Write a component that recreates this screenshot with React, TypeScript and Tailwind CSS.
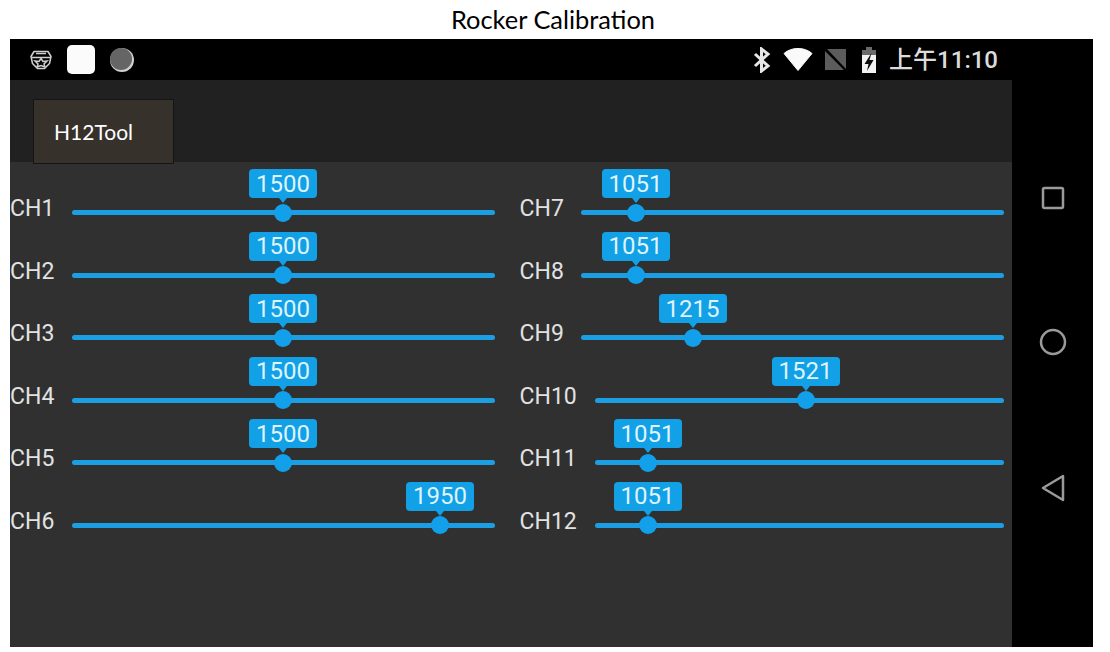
import React from "react";

interface Channel {
  name: string;
  value: number;
  thumb: number; // px from the track start
}

const leftChannels: Channel[] = [
  { name: "CH1", value: 1500, thumb: 211 },
  { name: "CH2", value: 1500, thumb: 211 },
  { name: "CH3", value: 1500, thumb: 211 },
  { name: "CH4", value: 1500, thumb: 211 },
  { name: "CH5", value: 1500, thumb: 211 },
  { name: "CH6", value: 1950, thumb: 368 },
];

const rightChannels: Channel[] = [
  { name: "CH7", value: 1051, thumb: 55 },
  { name: "CH8", value: 1051, thumb: 55 },
  { name: "CH9", value: 1215, thumb: 112 },
  { name: "CH10", value: 1521, thumb: 211 },
  { name: "CH11", value: 1051, thumb: 53 },
  { name: "CH12", value: 1051, thumb: 53 },
];

const ChannelRow: React.FC<{ channel: Channel; labelClass: string }> = ({ channel, labelClass }) => (
  <div className="flex h-[62.6px] items-start pt-[29px]">
    <span className={`${labelClass} shrink-0 text-[23px] leading-[24px] text-[#e2e2e2]`}>{channel.name}</span>
    <div className="relative mt-[13px] h-[5px] flex-1 rounded-full bg-[#1b9fe2]">
      <div
        className="absolute top-1/2 h-[18px] w-[18px] -translate-x-1/2 -translate-y-1/2 rounded-full bg-[#12a0ea]"
        style={{ left: channel.thumb }}
      />
      <div
        className="absolute top-[-41px] flex h-[29px] w-[68px] -translate-x-1/2 items-center justify-center rounded-[4px] bg-[#12a0e6] text-[24px] leading-none text-[#dff3fc]"
        style={{ left: channel.thumb }}
      >
        {channel.value}
        <span className="absolute bottom-[-5px] left-1/2 h-0 w-0 -translate-x-1/2 border-x-[4px] border-t-[5px] border-x-transparent border-t-[#12a0e6]" />
      </div>
    </div>
  </div>
);

const StatusLeft = () => (
  <div className="flex items-center">
    <svg width="24" height="22" viewBox="0 0 24 22" fill="none" stroke="#d0d0d0" strokeWidth="1.500" className="ml-[19px]">
      <path d="M5 2.500h14l3 5-1.500 7-5 5h-7l-5-5L2 7.500z" strokeLinejoin="round" />
      <path d="M2.500 8.500h19M7 4.500h10" />
      <path d="M12 9.500l2 3 4-.5-3 3 1 3-4-1.500L8 18l1-3-3-3 4 .5z" />
    </svg>
    <div className="ml-[14px] h-[29px] w-[28px] rounded-[5px] bg-[#fbfbfb]" />
    <svg width="26" height="26" viewBox="0 0 26 26" className="ml-[14px]">
      <circle cx="13" cy="13" r="12" fill="#cfcfcf" />
      <circle cx="12" cy="12" r="11" fill="#656565" />
    </svg>
  </div>
);

const StatusRight = () => (
  <div className="flex items-center">
    <svg width="20" height="26" viewBox="0 0 20 26" fill="none" stroke="#e6e6e6" strokeWidth="3">
      <path d="M3 7l13 12-6.500 5V2L16 7 3 19" />
    </svg>
    <svg width="30" height="23" viewBox="0 0 30 23" className="ml-[11px]">
      <path d="M1 5.500C5 2 9.500 .5 15 .5s10 1.500 14 5L15 22.500z" fill="#fafafa" stroke="#fafafa" strokeLinejoin="round" />
    </svg>
    <svg width="21" height="21" viewBox="0 0 21 21" className="ml-[12px]">
      <path d="M2 0h19v20z" fill="#5c5c5c" />
      <path d="M0 2v19h19z" fill="#5c5c5c" />
    </svg>
    <svg width="16" height="26" viewBox="0 0 16 26" className="ml-[15px]">
      <path d="M5 0h6v3h4v5H1V3h4z" fill="#6a6a6a" />
      <path d="M1 8h14v18H1z" fill="#f2f2f2" />
      <path d="M10.500 6l-7 11h4l-1.500 7 6.500-11h-4z" fill="#0a0a0a" />
    </svg>
    <span className="ml-[12px] font-['Roboto','Noto_Sans_CJK_SC',sans-serif] text-[24px] leading-none font-medium text-[#dcdcdc]">
      上午11:10
    </span>
  </div>
);

export default function App() {
  return (
    <div className="flex h-[652px] w-[1110px] flex-col overflow-hidden bg-white font-['Roboto',sans-serif]">
      <h1 className="h-[39px] pt-[4px] pr-[4px] text-center font-['Lato',sans-serif] text-[25.400px] leading-[30px] text-black">
        Rocker Calibration
      </h1>

      <div className="ml-[10px] flex h-[608px] w-[1083px] bg-black">
        <div className="flex w-[1002px] flex-col">
          <div className="flex h-[41px] items-center justify-between pr-[14px]">
            <StatusLeft />
            <StatusRight />
          </div>

          <div className="h-[82px] bg-[#212121] pt-[19px] pl-[23px]">
            <button
              type="button"
              className="relative z-10 h-[65px] w-[141px] border border-[#151515] bg-[#37312c] pl-[20px] text-left font-['Lato',sans-serif] text-[21px] text-white"
            >
              H12Tool
            </button>
          </div>

          <div className="grid flex-1 grid-cols-2 content-start gap-x-[25px] bg-[#303030] pt-[6px] pr-[8px]">
            <div>
              {leftChannels.map((channel) => (
                <ChannelRow key={channel.name} channel={channel} labelClass="w-[62px]" />
              ))}
            </div>
            <div>
              {rightChannels.map((channel, i) => (
                <ChannelRow key={channel.name} channel={channel} labelClass={i < 3 ? "w-[61px]" : "w-[75px]"} />
              ))}
            </div>
          </div>
        </div>

        <div className="flex flex-1 flex-col items-center pt-[147px]">
          <svg width="24" height="24" viewBox="0 0 24 24" fill="none" stroke="#9a9a9a" strokeWidth="2.500">
            <rect x="2" y="2" width="20" height="20" rx="1.500" />
          </svg>
          <svg width="28" height="28" viewBox="0 0 28 28" fill="none" stroke="#9a9a9a" strokeWidth="2.500" className="mt-[118px]">
            <circle cx="14" cy="14" r="12" />
          </svg>
          <svg width="24" height="28" viewBox="0 0 24 28" fill="none" stroke="#9a9a9a" strokeWidth="2.500" strokeLinejoin="round" className="mt-[118px]">
            <path d="M22 2v24L2 14z" />
          </svg>
        </div>
      </div>
    </div>
  );
}
